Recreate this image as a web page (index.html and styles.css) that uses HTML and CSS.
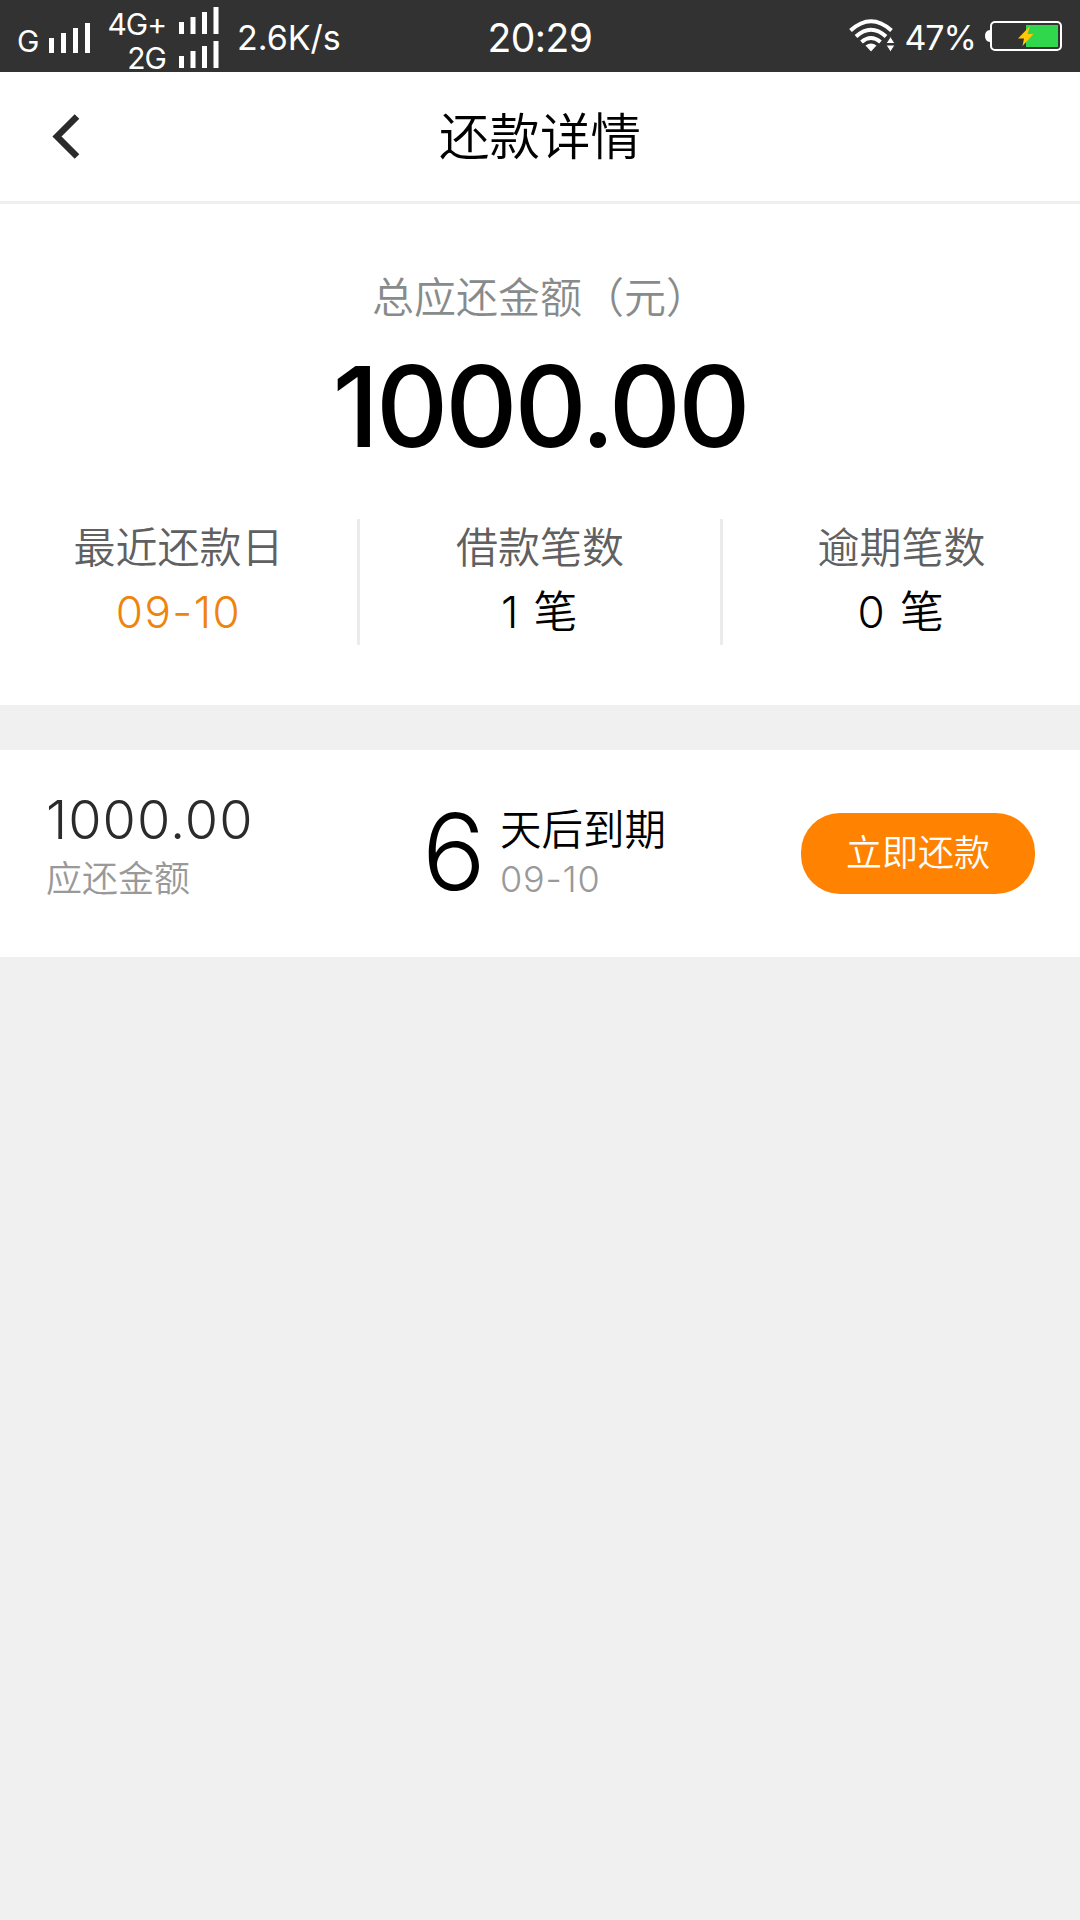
FILE: index.html
```html
<!DOCTYPE html>
<html lang="zh-CN">
<head>
    <meta charset="UTF-8">
    <title>还款详情</title>
    <link rel="stylesheet" href="styles.css">
</head>
<body>

<!--状态栏-->
<div class="status">
    <div class="status_left">
        <span class="net net_g">G</span>
        <svg class="signal" width="42" height="30" viewBox="0 0 42 30" fill="#fff">
            <path d="M0 15h5v15H0zM12 10h5v20h-5zM24 5h5v25h-5zM36 0h5v30h-5z"/>
        </svg>
        <div class="sims">
            <div class="sim">
                <span class="net">4G+</span>
                <svg width="40" height="27" viewBox="0 0 40 27" fill="#fff">
                    <path d="M0 15h5v12H0zM11.500 10h5v17h-5zM23 5h5v22h-5zM34.500 0h5v27h-5z"/>
                </svg>
            </div>
            <div class="sim">
                <span class="net">2G</span>
                <svg width="40" height="27" viewBox="0 0 40 27" fill="#fff">
                    <path d="M0 15h5v12H0zM11.500 10h5v17h-5zM23 5h5v22h-5zM34.500 0h5v27h-5z"/>
                </svg>
            </div>
        </div>
        <span class="speed">2.6K/s</span>
    </div>
    <div class="time">20:29</div>
    <div class="status_right">
        <svg class="wifi" width="46" height="34" viewBox="0 0 46 34">
            <g fill="none" stroke="#fff" stroke-width="4">
                <path d="M1.500 11.500Q22 -7 42.500 11.500"/>
                <path d="M7 17.500Q22 4 37 17.500"/>
                <path d="M12.500 23Q22 15 31.500 23"/>
            </g>
            <path fill="#fff" d="M16.500 26.500Q22 22.500 27.500 26.500L22 32.500z"/>
            <path fill="#fff" stroke="#323232" stroke-width="1" d="M37 24.500L41.500 17.500L46 24.500zM37 26h9L41.500 33z"/>
        </svg>
        <span class="percent">47%</span>
        <svg class="battery" width="78" height="32" viewBox="0 0 78 32">
            <path fill="#fff" d="M5 10v12Q0 21.500 0 16T5 10z"/>
            <rect x="6" y="2" width="70" height="28" rx="4" fill="none" stroke="#fff" stroke-width="2"/>
            <rect x="41" y="5" width="32" height="22" fill="#30d64c"/>
            <path fill="#ffc60a" d="M45 6L33 18.500h6L37.500 26L48.500 14h-6z"/>
        </svg>
    </div>
</div>

<!--标题栏-->
<div class="header">
    <svg class="back" width="28" height="46" viewBox="0 0 28 46">
        <path d="M25 2.500L5 22.500L25 42.500" fill="none" stroke="#2b2b2b" stroke-width="6.500"/>
    </svg>
    <h1 class="title">还款详情</h1>
</div>

<!--汇总-->
<div class="summary">
    <p class="summary_label">总应还金额（元）</p>
    <p class="summary_money">1000.00</p>
    <div class="columns">
        <div class="column">
            <p class="column_label">最近还款日</p>
            <p class="column_value orange">09-10</p>
        </div>
        <div class="column middle">
            <p class="column_label">借款笔数</p>
            <p class="column_value">1 笔</p>
        </div>
        <div class="column">
            <p class="column_label">逾期笔数</p>
            <p class="column_value">0 笔</p>
        </div>
    </div>
</div>

<!--还款项-->
<div class="item">
    <div class="item_money">
        <p class="money">1000.00</p>
        <p class="money_label">应还金额</p>
    </div>
    <p class="days">6</p>
    <div class="due">
        <p class="due_text">天后到期</p>
        <p class="due_date">09-10</p>
    </div>
    <button class="btn_pay" type="button">立即还款</button>
</div>

</body>
</html>
```

FILE: styles.css
```css
* {
    margin: 0;
    padding: 0;
    box-sizing: border-box;
}

body {
    background-color: #f0f0f0;
    font-family: Inter, "Noto Sans CJK SC", sans-serif;
    font-weight: 350;
    color: #000;
}

svg {
    display: block;
    flex: none;
}

/*状态栏*/
.status {
    display: grid;
    grid-template-columns: 1fr auto 1fr;
    height: 72px;
    background-color: #323232;
    color: #fff;
    font-weight: 400;
    white-space: nowrap;
}

.status_left {
    display: flex;
    padding-left: 17px;
}

.net {
    font-size: 30px;
    line-height: 34px;
    letter-spacing: -1px;
}

.net_g {
    width: 32px;
    padding-top: 24px;
}

.signal {
    margin-top: 23px;
}

.sims {
    width: 128px;
    padding-top: 7px;
}

.sim {
    display: flex;
    justify-content: flex-end;
    gap: 13px;
    height: 34px;
}

.speed {
    margin-left: 18px;
    font-size: 34px;
    line-height: 75px;
}

.time {
    font-size: 39px;
    line-height: 76px;
    letter-spacing: -0.5px;
}

.status_right {
    display: flex;
    justify-content: flex-end;
    padding-right: 17px;
}

.wifi {
    margin-top: 19px;
}

.percent {
    margin: 0 9px 0 9px;
    font-size: 34px;
    line-height: 75px;
    letter-spacing: -1px;
}

.battery {
    margin-top: 20px;
}

/*标题栏*/
.header {
    display: flex;
    align-items: center;
    height: 132px;
    padding: 0 52px;
    background-color: #fff;
    border-bottom: 3px solid #efefef;
}

.title {
    flex: 1;
    padding-right: 28px;
    font-size: 50.5px;
    font-weight: 350;
    line-height: 60px;
    text-align: center;
}

/*汇总*/
.summary {
    height: 501px;
    padding-top: 64px;
    background-color: #fff;
    text-align: center;
}

.summary_label {
    font-size: 42px;
    line-height: 60px;
    color: #888b8b;
}

.summary_money {
    margin-top: 18px;
    font-size: 112px;
    font-weight: 500;
    line-height: 120px;
    letter-spacing: -3px;
}

.columns {
    display: flex;
    margin-top: 53px;
}

.column {
    flex: 1;
    height: 126px;
}

.middle {
    flex: 0 0 366px;
    border-left: 3px solid #ebebeb;
    border-right: 3px solid #ebebeb;
}

.column_label {
    padding-top: 2px;
    font-size: 42px;
    line-height: 54px;
    color: #606060;
}

.column_value {
    margin-top: 5px;
    font-size: 44px;
    line-height: 65px;
    letter-spacing: 1.5px;
}

.orange {
    color: #ee840c;
}

/*还款项*/
.item {
    display: flex;
    height: 207px;
    margin-top: 45px;
    padding: 0 45px 0 46px;
    background-color: #fff;
}

.item_money {
    width: 376px;
    padding-top: 39px;
}

.money {
    font-size: 54px;
    line-height: 62px;
    letter-spacing: 1px;
    color: #2b2b2b;
}

.money_label {
    margin-top: 8px;
    font-size: 36px;
    line-height: 40px;
    color: #999;
}

.days {
    width: 78px;
    font-size: 106px;
    line-height: 203px;
}

.due {
    padding-top: 53px;
}

.due_text {
    font-size: 41.5px;
    line-height: 54px;
}

.due_date {
    margin-top: 2px;
    font-size: 36px;
    line-height: 40px;
    letter-spacing: 0.8px;
    color: #999;
}

.btn_pay {
    width: 234px;
    height: 81px;
    margin: 63px 0 0 auto;
    padding-bottom: 7px;
    border: none;
    border-radius: 39px;
    background-color: #ff8200;
    color: #fff;
    font-family: inherit;
    font-size: 36px;
    font-weight: 350;
}
```
